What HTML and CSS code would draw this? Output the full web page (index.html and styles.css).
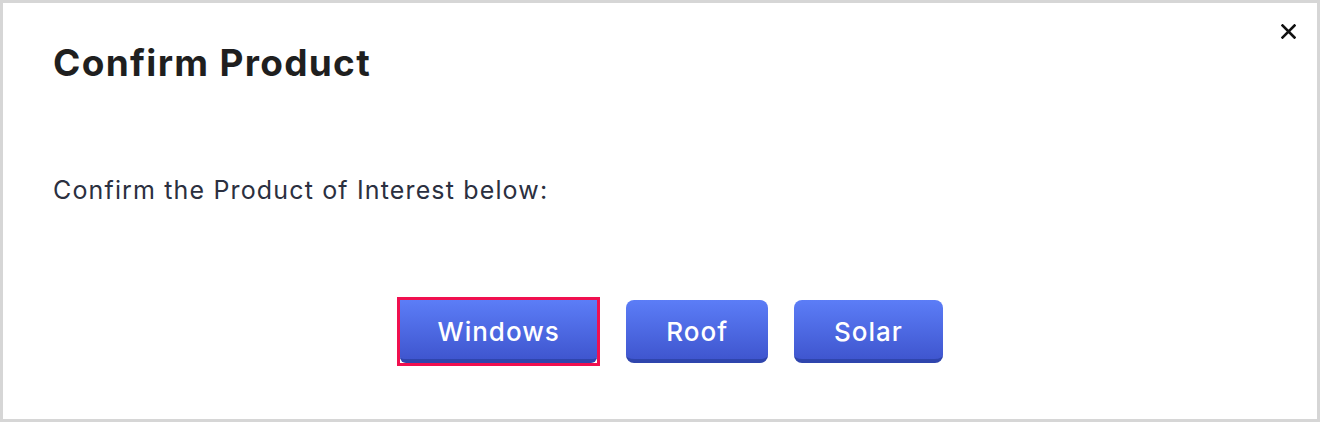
FILE: index.html
```html
<!DOCTYPE html>
<html lang="en">
<head>
<meta charset="utf-8">
<title>Confirm Product</title>
<link rel="stylesheet" href="styles.css">
</head>
<body>
<div class="dialog">
  <button class="close" aria-label="Close">
    <svg width="15" height="15" viewBox="0 0 15 15"><path d="M1.5 1.5 L13.5 13.5 M13.5 1.5 L1.5 13.5" stroke="#111" stroke-width="2.6" stroke-linecap="square" fill="none"/></svg>
  </button>
  <h1 class="title">Confirm Product</h1>
  <p class="prompt">Confirm the Product of Interest below:</p>
  <div class="choices">
    <button class="choice is-focused">Windows</button>
    <button class="choice">Roof</button>
    <button class="choice">Solar</button>
  </div>
</div>
</body>
</html>
```

FILE: styles.css
```css
* { box-sizing: border-box; }
html, body { margin: 0; padding: 0; background: #fff; }
body { font-family: Inter, "Noto Sans", sans-serif; }
.dialog {
  position: relative;
  width: 1320px;
  height: 422px;
  border: 3px solid #d6d6d6;
  background: #fff;
  padding: 38px 50px 0 50px;
}
.close {
  position: absolute;
  top: 21px;
  right: 21px;
  width: 15px;
  height: 15px;
  padding: 0;
  border: 0;
  background: none;
  display: flex;
}
.title {
  margin: 0;
  font-size: 37px;
  font-weight: 700;
  color: #1f1f1f;
  line-height: 44px;
  letter-spacing: 1.3px;
}
.prompt {
  margin: 90px 0 0 0;
  font-size: 25px;
  font-weight: 400;
  color: #2b3040;
  line-height: 30px;
  letter-spacing: 1.15px;
}
.choices {
  display: flex;
  justify-content: center;
  gap: 26px;
  margin-top: 95px;
  padding-left: 20px;
}
.choice {
  position: relative;
  font-family: inherit;
  font-size: 26px;
  font-weight: 500;
  letter-spacing: 1px;
  color: #fff;
  height: 63px;
  padding: 3px 40px 0;
  border: 0;
  border-radius: 8px;
  border-bottom: 4px solid #2f45ad;
  background: linear-gradient(#5c7df7, #3f56cf);
}
.choice.is-focused {
  padding: 3px 37.5px 0;
  margin: 0 3px;
  border-radius: 0 0 6px 6px;
}
.choice.is-focused::after {
  content: "";
  position: absolute;
  left: -3px;
  right: -3px;
  top: -3px;
  bottom: -7px;
  border: 3px solid #f0104f;
  pointer-events: none;
}
```
